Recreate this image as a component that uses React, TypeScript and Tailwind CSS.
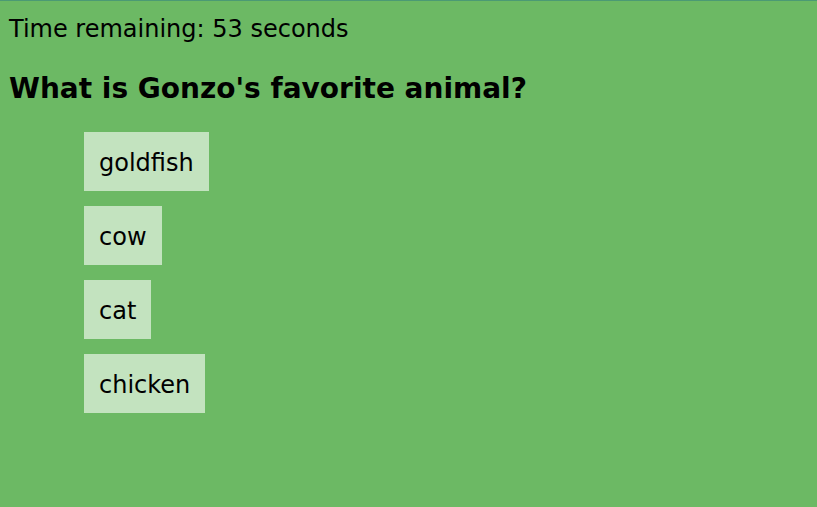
const answers = ["goldfish", "cow", "cat", "chicken"];

export default function App() {
  return (
    <main className="min-h-screen border-t border-[#4b9a74] bg-[#6cb964] px-[9px] pt-[13px] font-['DejaVu_Sans',Verdana,sans-serif] text-2xl leading-[30px] text-black">
      <p>Time remaining: 53 seconds</p>
      <h1 className="mt-7 text-[28px] leading-[34px] font-bold">What is Gonzo's favorite animal?</h1>
      <ul className="mt-[26px] flex flex-col items-start gap-[15px] pl-[75px]">
        {answers.map((answer) => (
          <li key={answer}>
            <button type="button" className="block bg-[#c3e3bf] px-[15px] pt-[17px] pb-[13px] leading-[29px]">
              {answer}
            </button>
          </li>
        ))}
      </ul>
    </main>
  );
}
